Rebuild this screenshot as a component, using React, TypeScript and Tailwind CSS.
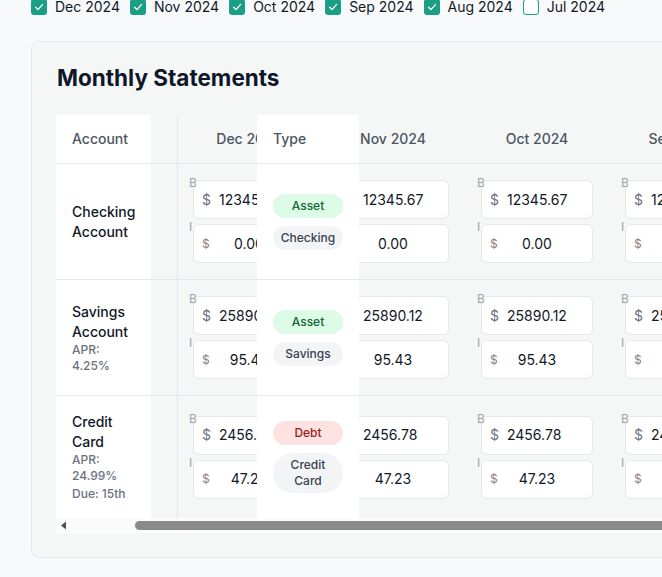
import React from 'react';

const months = [
  { label: 'Dec 2024', checked: true },
  { label: 'Nov 2024', checked: true },
  { label: 'Oct 2024', checked: true },
  { label: 'Sep 2024', checked: true },
  { label: 'Aug 2024', checked: true },
  { label: 'Jul 2024', checked: false },
];

interface Account {
  name: string;
  notes: string[][];
  kind: 'Asset' | 'Debt';
  sub: string;
  balance: string;
  interest: string;
}

const accounts: Account[] = [
  { name: 'Checking Account', notes: [], kind: 'Asset', sub: 'Checking', balance: '12345.67', interest: '0.00' },
  { name: 'Savings Account', notes: [['APR:', '4.25%']], kind: 'Asset', sub: 'Savings', balance: '25890.12', interest: '95.43' },
  { name: 'Credit Card', notes: [['APR:', '24.99%'], ['Due: 15th']], kind: 'Debt', sub: 'Credit Card', balance: '2456.78', interest: '47.23' },
];

function Check({ checked }: { checked: boolean }) {
  if (!checked) {
    return <span className="h-4 w-4 shrink-0 rounded-[3px] border border-[#1a9e84] bg-white" />;
  }
  return (
    <span className="flex h-4 w-4 shrink-0 items-center justify-center rounded-[3px] bg-[#1a9e84]">
      <svg width="10" height="10" viewBox="0 0 10 10" fill="none">
        <polyline points="1.6,5.2 4,7.6 8.6,2.4" stroke="white" strokeWidth="1.3" strokeLinecap="round" strokeLinejoin="round" />
      </svg>
    </span>
  );
}

function MoneyInputs({ balance, interest }: { balance: string; interest: string }) {
  return (
    <div className="flex w-[112px] flex-col gap-[5px]">
      <div className="relative">
        <span className="absolute -left-1 -top-[3px] text-xs leading-none text-[#a1a4ad]">B</span>
        <div className="flex h-[39px] items-center gap-2 rounded-md border border-[#e5e7eb] bg-white pl-2 text-sm">
          <span className="text-[#6b7280]">$</span>
          <span className="text-[#111827]">{balance}</span>
        </div>
      </div>
      <div className="relative">
        <span className="absolute -left-1 -top-[3px] text-xs leading-none text-[#a1a4ad]">I</span>
        <div className="flex h-[39px] items-center rounded-md border border-[#e5e7eb] bg-white pl-2 pr-[15px]">
          <span className="w-[7px] text-xs text-[#8a7f7f]">$</span>
          <span className="flex-1 text-center text-sm text-[#111827]">{interest}</span>
        </div>
      </div>
    </div>
  );
}

function Badges({ kind, sub }: { kind: string; sub: string }) {
  const tone = kind === 'Debt' ? 'bg-[#fee2e2] text-[#991b1b]' : 'bg-[#dcfce7] text-[#166534]';
  return (
    <div className="flex w-full flex-col gap-2">
      <span className={`rounded-full px-1.5 py-1 text-center text-xs leading-4 font-medium ${tone}`}>{kind}</span>
      <span className="rounded-full bg-[#f3f4f6] px-1.5 py-1 text-center text-xs leading-4 font-medium text-[#374151]">{sub}</span>
    </div>
  );
}

export default function App() {
  return (
    <div className="min-h-screen w-full overflow-hidden bg-[#f8f9fb] font-['Inter',sans-serif] text-[#111827]">
      {/* Month filters */}
      <div className="-mt-px flex h-4 items-center gap-x-[10px] pl-[31px]">
        {months.map((m) => (
          <label key={m.label} className="flex items-center gap-2 text-sm leading-4 whitespace-nowrap text-[#111827]">
            <Check checked={m.checked} />
            {m.label}
          </label>
        ))}
      </div>

      <div className="ml-[31px] mt-[26px] w-[900px] rounded-lg border border-[#e3e7ee] bg-[#f5f7f7] p-6">
        <h2 className="mb-[25px] pl-px text-[22.5px] leading-6 font-bold text-[#0f172a]">Monthly Statements</h2>

        <div className="flex flex-col">
          {/* Header */}
          <div className="flex h-[49px] border-b border-[#e2e6ee] text-sm font-medium text-[#4b5563]">
            <div className="flex w-[95px] shrink-0 items-center bg-white px-4">Account</div>
            <div className="w-[27px] shrink-0 border-r border-[#e2e6ee]" />
            <div className="w-[79px] shrink-0 overflow-hidden">
              <div className="flex h-full w-[142px] items-center justify-center">Dec 2024</div>
            </div>
            <div className="flex w-[102px] shrink-0 items-center bg-white px-4">Type</div>
            <div className="flex w-[106px] shrink-0 justify-end overflow-hidden">
              <div className="flex h-full w-[144px] shrink-0 items-center justify-center">Nov 2024</div>
            </div>
            {['Oct 2024', 'Sep 2024', 'Aug 2024'].map((m) => (
              <div key={m} className="flex w-[144px] shrink-0 items-center justify-center">{m}</div>
            ))}
          </div>

          {/* Rows */}
          {accounts.map((a, idx) => (
            <div key={a.name} className={`flex ${idx < accounts.length - 1 ? 'border-b border-[#e2e6ee]' : ''}`}>
              <div className="flex w-[95px] shrink-0 flex-col justify-center bg-white px-4 py-4">
                <div className="text-sm leading-5 font-medium text-[#111827]">{a.name}</div>
                {a.notes.map((n, i) => (
                  <div key={i} className={`text-xs leading-4 font-medium text-[#6b7280] ${i > 0 ? 'mt-0.5' : ''}`}>
                    {n.map((line) => (
                      <div key={line}>{line}</div>
                    ))}
                  </div>
                ))}
              </div>
              <div className="w-[27px] shrink-0 border-r border-[#e2e6ee]" />
              <div className="flex w-[79px] shrink-0 items-center overflow-hidden">
                <div className="w-[144px] shrink-0 py-4 pl-[15px]">
                  <MoneyInputs balance={a.balance} interest={a.interest} />
                </div>
              </div>
              <div className="flex w-[102px] shrink-0 items-center bg-white px-4 py-4">
                <Badges kind={a.kind} sub={a.sub} />
              </div>
              <div className="flex w-[106px] shrink-0 items-center justify-end overflow-hidden">
                <div className="w-[144px] shrink-0 px-4 py-4">
                  <MoneyInputs balance={a.balance} interest={a.interest} />
                </div>
              </div>
              {[0, 1, 2].map((c) => (
                <div key={c} className="flex w-[144px] shrink-0 items-center px-4 py-4">
                  <MoneyInputs balance={a.balance} interest={a.interest} />
                </div>
              ))}
            </div>
          ))}

          {/* Scrollbar */}
          <div className="flex h-[15px] items-center bg-[#fbfbfb]">
            <svg width="14" height="15" viewBox="0 0 14 15" className="shrink-0">
              <polygon points="5,7.5 10,3.5 10,11.5" fill="#505050" />
            </svg>
            <div className="ml-[65px] h-[9px] flex-1 rounded-full bg-[#8a8a8a]" />
          </div>
        </div>
      </div>
    </div>
  );
}
